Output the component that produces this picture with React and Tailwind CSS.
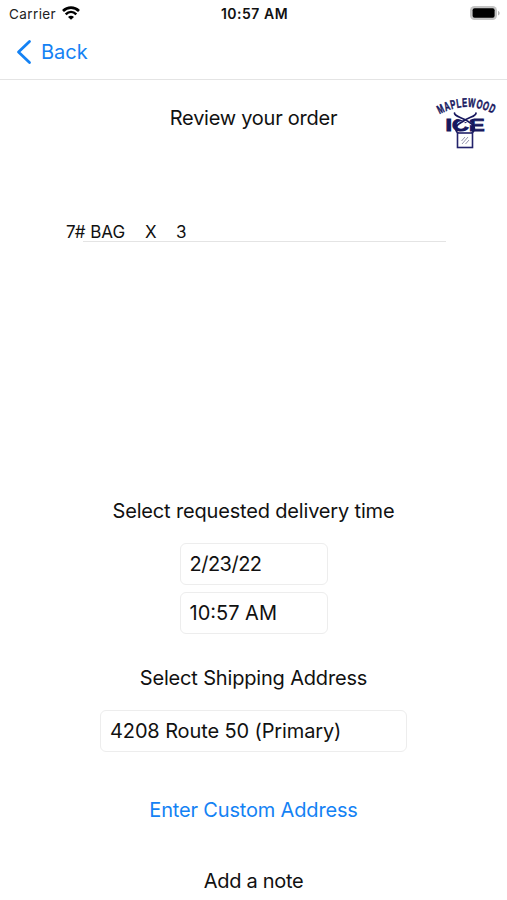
function StatusBar() {
  return (
    <div className="flex h-7 items-center justify-between pl-[9px] pr-[7px]">
      <div className="flex w-[120px] items-center gap-1.5">
        <span className="text-[13.5px] tracking-[0.4px] text-[#222]">Carrier</span>
        <svg width="18" height="14" viewBox="0 0 18 14" fill="none" stroke="#000" className="-mt-0.5">
          <path d="M1 5C5.600 .6 12.400 .6 17 5" strokeWidth="2.7" />
          <path d="M3.700 8.300C6.800 5.300 11.200 5.300 14.300 8.300" strokeWidth="2.5" />
          <path d="M9 13.800 6 10.900C7.600 9.300 10.400 9.300 12 10.900Z" fill="#000" stroke="none" />
        </svg>
      </div>
      <span className="-mt-px text-[14px] font-semibold tracking-[0.5px] text-[#111]">10:57 AM</span>
      <div className="flex w-[120px] justify-end">
        <svg width="31" height="16" viewBox="0 0 31 16" className="-mt-0.5">
          <rect x="1" y="1" width="27" height="14" rx="4.5" fill="#c4c4c4" />
          <rect x="3.6" y="3.2" width="22" height="9.6" rx="2" fill="#000" />
          <path d="M29 6v4.400c2.200-.7 2.200-3.700 0-4.400Z" fill="#b5b5b5" />
        </svg>
      </div>
    </div>
  );
}

function Logo() {
  return (
    <svg width="76" height="64" viewBox="0 0 76 64" className="absolute right-0 top-[8px]">
      <defs>
        <path id="arch" d="M8.500 26.500Q35 12 61.500 25.500L70 30" />
      </defs>
      <text fill="#17175e" stroke="#17175e" strokeWidth="0.5" className="font-['Liberation_Sans'] text-[12.500px] font-bold tracking-[1px]">
        <textPath href="#arch" textLength="56.5" lengthAdjust="spacingAndGlyphs">MAPLEWOOD</textPath>
      </text>
      <text x="14.500" y="43" textLength="39" lengthAdjust="spacingAndGlyphs" fill="#17175e" stroke="#17175e" strokeWidth="0.9" className="font-['Liberation_Sans'] text-[16px] font-bold tracking-normal">
        ICE
      </text>
      <g fill="none" strokeLinecap="round">
        <g stroke="#fff" strokeWidth="2.4">
          <path d="M27 29.500 34.500 32.500 40 36" />
          <path d="M42 29.500 34.500 32.500 29 36" />
        </g>
        <g stroke="#17175e" strokeWidth="1.7">
          <path d="M23.500 25C23 28.500 31 29 38 34 43 37 45.500 41 41 45" />
          <path d="M45 25C45.500 28.500 37 29 31 34 25 37 22.500 41 27 45" />
        </g>
      </g>
      <rect x="26.500" y="45" width="15" height="14.500" fill="#fff" stroke="#23236b" strokeWidth="1.6" />
      <path d="m30.500 53 3.500-4M31 56l6-7M34.500 56l3.500-4" stroke="#8888a5" strokeWidth="0.9" />
    </svg>
  );
}

function Field({ children, className }) {
  return (
    <div className={`flex h-[42px] items-center rounded-md border border-[#ededed] pl-[9px] ${className}`}>
      {children}
    </div>
  );
}

export default function App() {
  return (
    <main className="h-[900px] w-full overflow-hidden bg-white font-[Inter,sans-serif] text-[20px] tracking-[-0.17px] text-[#111]">
      <StatusBar />
      <header className="flex h-[52px] items-center border-b border-[#e4e4e4] pb-[3px] pl-4 text-[#1482f4]">
        <svg width="16" height="26" viewBox="0 0 16 26" fill="none" stroke="currentColor" strokeWidth="2.8" strokeLinecap="round" strokeLinejoin="round">
          <path d="M13.500 2.500 2.500 13l11 10.500" />
        </svg>
        <span className="ml-[9px] tracking-normal">Back</span>
      </header>

      <section className="relative flex h-[144px] justify-center pt-[23px]">
        <h1 className="leading-[30px] tracking-[-0.25px]">Review your order</h1>
        <Logo />
      </section>

      <div className="h-[275px] pl-[66px]">
        <div className="flex h-[17px] items-center text-[17px] tracking-normal">
          <span className="w-[79px]">7# BAG</span>
          <span className="w-[31px]">X</span>
          <span>3</span>
        </div>
        <div className="ml-[17px] w-[363px] border-t border-[#e4e4e4]" />
      </div>

      <section className="flex flex-col items-center">
        <h2 className="leading-6">Select requested delivery time</h2>
        <div className="mt-5 flex flex-col gap-[7px]">
          <Field className="w-[148px] tracking-[-0.500px]">2/23/22</Field>
          <Field className="w-[148px] tracking-normal">10:57 AM</Field>
        </div>
        <h2 className="mt-8 leading-6">Select Shipping Address</h2>
        <Field className="mt-5 w-[307px] tracking-[-0.12px]">4208 Route 50 (Primary)</Field>
        <button className="mt-[46px] leading-6 tracking-[-0.17px] text-[#1482f4]">Enter Custom Address</button>
        <h2 className="mt-[47px] leading-6 tracking-[-0.3px]">Add a note</h2>
      </section>
    </main>
  );
}
